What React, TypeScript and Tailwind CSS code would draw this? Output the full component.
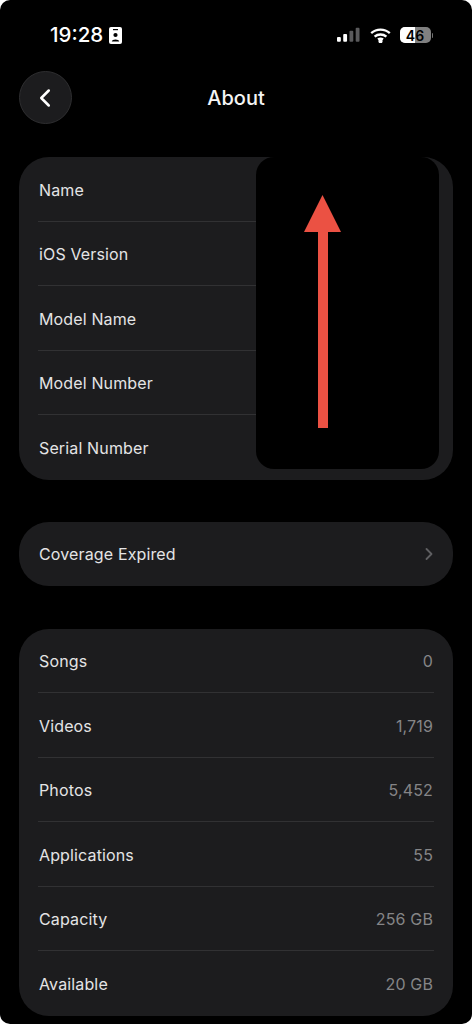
import { ChevronLeft, ChevronRight } from 'lucide-react';

const font = { fontFamily: 'Inter, "Liberation Sans", sans-serif' };

const deviceRows = ['Name', 'iOS Version', 'Model Name', 'Model Number', 'Serial Number'];

const mediaRows = [
    { label: 'Songs', value: '0' },
    { label: 'Videos', value: '1,719' },
    { label: 'Photos', value: '5,452' },
    { label: 'Applications', value: '55' },
    { label: 'Capacity', value: '256 GB' },
    { label: 'Available', value: '20 GB' },
];

function Row({ label, value, last }: { label: string; value?: string; last: boolean }) {
    return (
        <div className={`h-[64.5px] pt-[2px] px-[1px] flex items-center justify-between ${last ? '' : 'border-b border-[#313133]'}`}>
            <span className="text-[16px] tracking-[0.14px] text-[#e4e4e5]">{label}</span>
            {value && <span className="text-[16px] tracking-[0.14px] text-[#858587]">{value}</span>}
        </div>
    );
}

function StatusIcons() {
    return (
        <div className="flex items-center">
            {/* Signal */}
            <svg width="23" height="16" viewBox="0 0 24 16" className="mr-[10px]">
                <rect x="0" y="10" width="4" height="5" rx="1" fill="#ffffff" />
                <rect x="6.5" y="7" width="4" height="8" rx="1" fill="#ffffff" />
                <rect x="13" y="3.5" width="4" height="11.5" rx="1" fill="#5a5a5c" />
                <rect x="19.5" y="0.5" width="4" height="14.5" rx="1" fill="#5a5a5c" />
            </svg>
            {/* Wifi */}
            <svg width="21" height="15" viewBox="0 0 21 15" className="mr-[9px]" fill="none" stroke="#ffffff" strokeWidth="2.4">
                <path d="M1.2 5.2C6.6 0.4 14.4 0.4 19.8 5.2" />
                <path d="M4.6 8.6C8 5.7 13 5.7 16.4 8.6" />
                <path d="M8 11.6C9.4 10.6 11.6 10.6 13 11.6" />
                <circle cx="10.5" cy="13.2" r="0.9" fill="#ffffff" />
            </svg>
            {/* Battery */}
            <div className="relative w-[31px] h-[16px] rounded-[5px] overflow-hidden bg-[#808080] flex">
                <div className="w-[15px] h-full bg-white" />
                <span className="absolute inset-0 flex items-center justify-center text-[14px] font-semibold text-black">
                    46
                </span>
            </div>
            <div className="ml-[1px] w-[1.5px] h-[5px] rounded-r-full bg-[#707070]" />
        </div>
    );
}

export default function App() {
    return (
        <div className="w-[472px] h-[1024px] bg-white overflow-hidden" style={font}>
            <div className="w-full h-full bg-black rounded-[10px] px-[19px] relative">
                {/* Status bar */}
                <div className="h-[71px] pt-[23px] pl-[31px] pr-[20px] flex items-start justify-between">
                    <div className="h-[24px] flex items-center gap-[6px]">
                        <span className="text-[20.5px] font-medium leading-none text-white">19:28</span>
                        <svg width="13" height="17" viewBox="0 0 13 17">
                            <rect width="13" height="17" rx="2" fill="#ffffff" />
                            <rect x="4" y="2" width="5" height="1.2" fill="#000000" />
                            <circle cx="6.5" cy="8" r="2.1" fill="#000000" />
                            <path d="M2.8 14.5C2.8 11.8 10.2 11.8 10.2 14.5Z" fill="#000000" />
                        </svg>
                    </div>
                    <div className="h-[24px] flex items-center">
                        <StatusIcons />
                    </div>
                </div>

                {/* Header */}
                <div className="relative h-[53px] flex items-center justify-center">
                    <button className="absolute left-0 top-0 w-[53px] h-[53px] rounded-full bg-[#1c1c1e] border border-[#2e2e30] flex items-center justify-center">
                        <ChevronLeft size={30} color="#ffffff" strokeWidth={2} className="-ml-[1px]" />
                    </button>
                    <span className="text-[20px] font-medium text-[#f5f5f5]">About</span>
                </div>

                {/* Device card */}
                <div className="relative mt-[33px] bg-[#1c1c1e] rounded-[30px] px-[19px]">
                    {deviceRows.map((label, i) => (
                        <Row key={label} label={label} last={i === deviceRows.length - 1} />
                    ))}
                    {/* Redaction box */}
                    <div className="absolute left-[237px] top-0 w-[183px] h-[312px] bg-black rounded-[18px]" />
                    <svg
                        className="absolute left-[285px] top-[38px]"
                        width="37"
                        height="233"
                        viewBox="0 0 37 233"
                    >
                        <polygon points="18.5,0 37,37 0,37" fill="#eb5143" />
                        <rect x="14" y="36" width="10" height="197" fill="#eb5143" />
                    </svg>
                </div>

                {/* Coverage */}
                <div className="mt-[42px] h-[64px] bg-[#1c1c1e] rounded-[30px] pl-[20px] pr-[19px] flex items-center justify-between">
                    <span className="text-[16px] tracking-[0.14px] text-[#e4e4e5]">Coverage Expired</span>
                    <ChevronRight size={20} color="#5f5f62" strokeWidth={2.2} className="-mr-[5px]" />
                </div>

                {/* Media card */}
                <div className="mt-[43px] bg-[#1c1c1e] rounded-[30px] px-[19px]">
                    {mediaRows.map((row, i) => (
                        <Row key={row.label} label={row.label} value={row.value} last={i === mediaRows.length - 1} />
                    ))}
                </div>
            </div>
        </div>
    );
}
